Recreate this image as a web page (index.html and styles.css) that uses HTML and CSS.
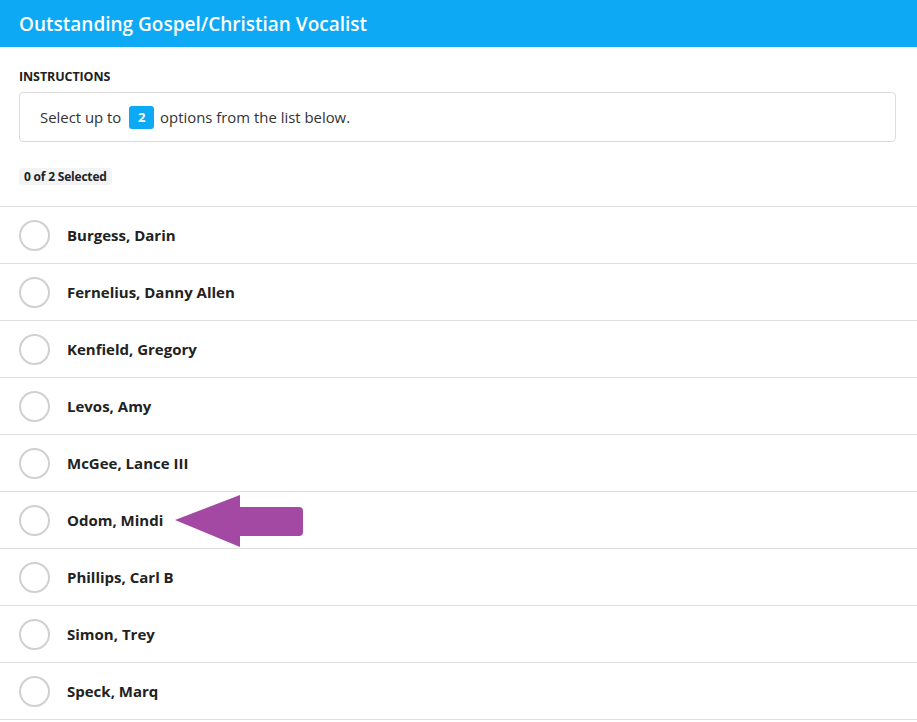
FILE: index.html
```html
<!DOCTYPE html>
<html>
<head>
<meta charset="utf-8">
<link rel="stylesheet" href="styles.css">
</head>
<body>
<div class="page">
  <header class="header"><h1 class="title">Outstanding Gospel/Christian Vocalist</h1></header>
  <section class="content">
    <div class="label">INSTRUCTIONS</div>
    <div class="instructions">Select up to <span class="num">2</span> options from the list below.</div>
    <div class="counter">0 of 2 Selected</div>
  </section>
  <ul class="list">
    <li class="row"><span class="radio"></span><span class="name">Burgess, Darin</span></li>
    <li class="row"><span class="radio"></span><span class="name">Fernelius, Danny Allen</span></li>
    <li class="row"><span class="radio"></span><span class="name">Kenfield, Gregory</span></li>
    <li class="row"><span class="radio"></span><span class="name">Levos, Amy</span></li>
    <li class="row"><span class="radio"></span><span class="name">McGee, Lance III</span></li>
    <li class="row"><span class="radio"></span><span class="name">Odom, Mindi</span></li>
    <li class="row"><span class="radio"></span><span class="name">Phillips, Carl B</span></li>
    <li class="row"><span class="radio"></span><span class="name">Simon, Trey</span></li>
    <li class="row"><span class="radio"></span><span class="name">Speck, Marq</span></li>
  </ul>
  <svg class="arrow" width="140" height="60" viewBox="0 0 140 60">
    <path d="M3 27 L68 2 L68 14 L127 14 Q131 14 131 18 L131 39 Q131 43 127 43 L68 43 L68 54 Z" fill="#a349a4"/>
  </svg>
</div>
</body>
</html>
```
FILE: styles.css
```css
* { box-sizing: border-box; }
html, body { margin: 0; padding: 0; background: #fff; }
body {
  font-family: "Open Sans", "Noto Sans", "Liberation Sans", sans-serif;
  color: #222;
}
.page { position: relative; width: 917px; height: 722px; overflow: hidden; }
.header {
  height: 47px;
  background: #0ea9f5;
  display: flex;
  align-items: center;
  padding-left: 19px;
}
.title {
  margin: 0;
  color: #fff;
  font-size: 19px;
  font-weight: 600;
  letter-spacing: 0;
}
.content { padding: 22px 21px 0 19px; }
.label {
  font-size: 12.5px;
  font-weight: 700;
  color: #222;
  line-height: 16px;
  letter-spacing: -0.1px;
}
.instructions {
  margin-top: 7px;
  height: 50px;
  border: 1px solid #dcdcdc;
  border-radius: 4px;
  display: flex;
  align-items: center;
  padding-left: 20px;
  font-size: 14.9px;
  color: #333;
  white-space: pre;
}
.num {
  display: inline-flex;
  align-items: center;
  justify-content: center;
  width: 25px;
  height: 23px;
  margin: 0 2px 0 4px;
  background: #0ea9f5;
  color: #fff;
  border-radius: 3px;
  font-weight: 700;
  font-size: 13px;
}
.counter {
  display: inline-block;
  margin-top: 26px;
  padding: 0 5px;
  height: 17px;
  line-height: 17px;
  background: #f1f3f5;
  border-radius: 3px;
  font-size: 12px;
  font-weight: 700;
  color: #222;
  letter-spacing: -0.2px;
}
.list {
  list-style: none;
  margin: 20px 0 0 0;
  padding: 0;
  border-top: 1px solid #dedede;
}
.row {
  height: 57px;
  border-bottom: 1px solid #dedede;
  display: flex;
  align-items: center;
  padding-left: 19px;
}
.radio {
  width: 31px;
  height: 31px;
  border: 2px solid #d0d0d0;
  border-radius: 50%;
  flex: none;
}
.name {
  margin-left: 17px;
  font-size: 15px;
  font-weight: 700;
  color: #222;
}
.arrow { position: absolute; left: 172px; top: 493px; }
```
